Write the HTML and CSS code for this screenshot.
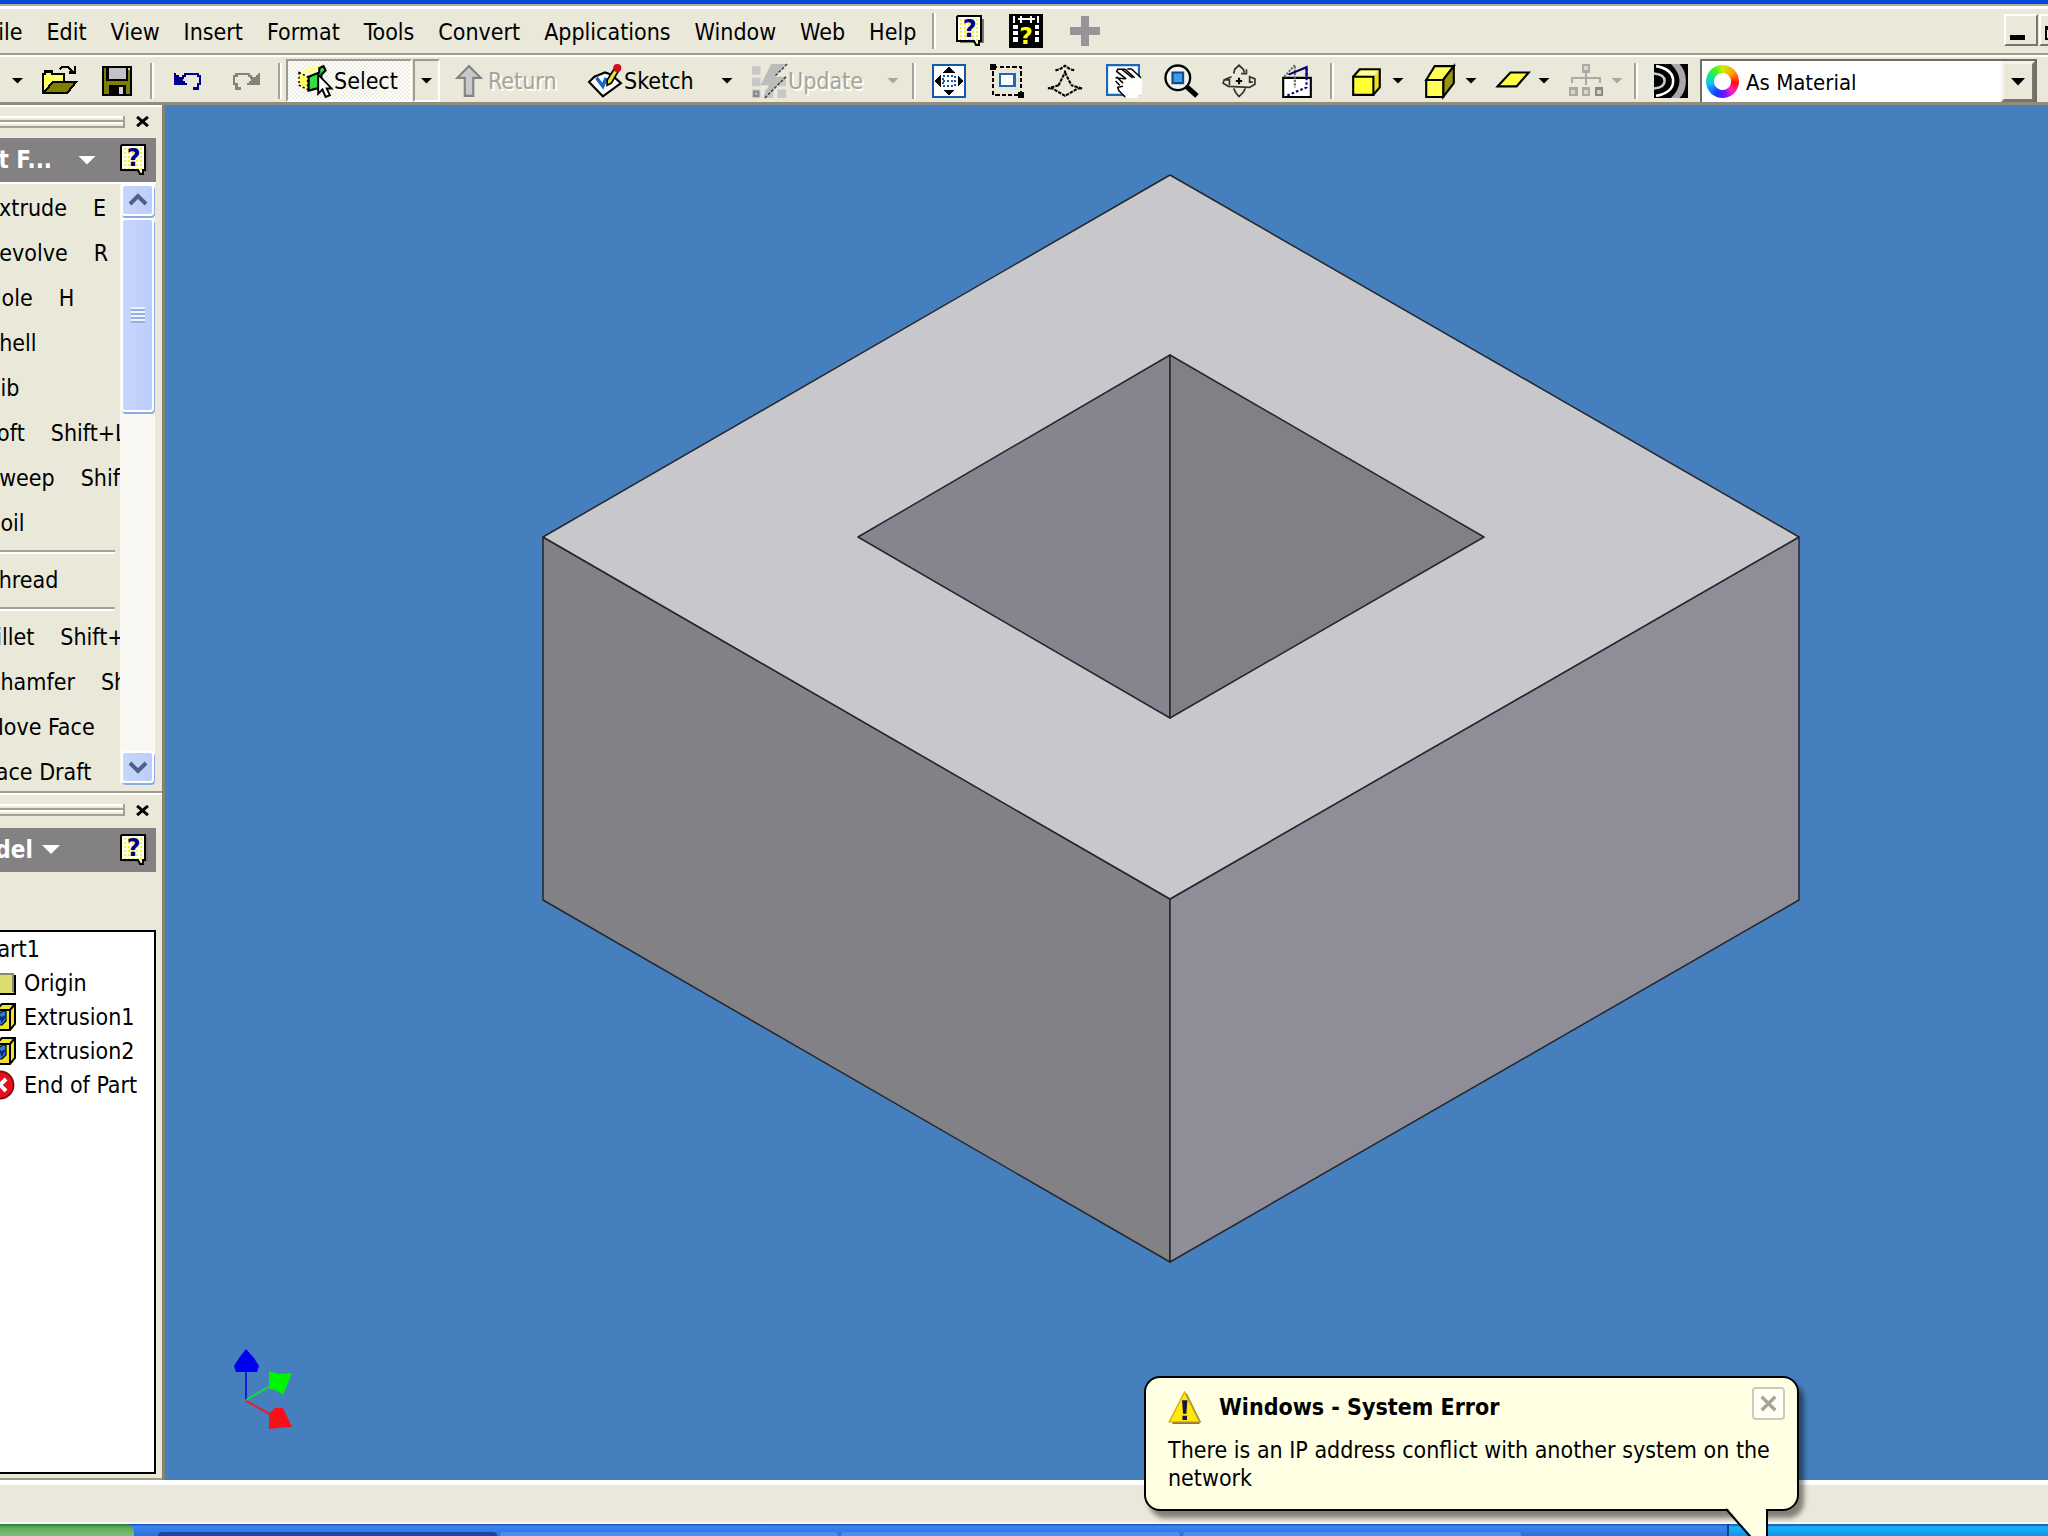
FILE: index.html
```
<!DOCTYPE html>
<html lang="en">
<head>
  <meta charset="UTF-8">
  <title>Part1</title>
  <link rel="stylesheet" href="styles.css">
</head>
<body>
  <div class="titlebar"></div>

  <nav class="menubar">
    <button class="menu">File</button>
    <button class="menu">Edit</button>
    <button class="menu">View</button>
    <button class="menu">Insert</button>
    <button class="menu">Format</button>
    <button class="menu">Tools</button>
    <button class="menu">Convert</button>
    <button class="menu">Applications</button>
    <button class="menu">Window</button>
    <button class="menu">Web</button>
    <button class="menu">Help</button>
    <span class="sep"></span>
    <div class="menu-icons">
      <button class="plain" aria-label="Help topics">
        <svg class="help-icon" viewBox="0 0 14 16"><use href="#help"/></svg>
      </button>
      <button class="plain" aria-label="Show me">
        <svg class="icon" viewBox="0 0 16 16" shape-rendering="crispEdges">
          <path d="M0 0h16v16H0z"/>
          <path fill="#fff" d="M2 1h1v3H2zM13 1h1v3h-1zM4 2h8v1H4zM5 1h1v3H5zM10 1h1v3h-1zM2 5h2v2H2zM2 8h2v2H2zM2 11h2v2H2zM12 5h2v2h-2zM12 8h2v2h-2zM12 11h2v2h-2z"/>
          <text x="8" y="14" class="glyph glyph-yellow">?</text>
        </svg>
      </button>
      <button class="plain" aria-label="Add">
        <svg class="icon" viewBox="0 0 16 16" shape-rendering="crispEdges">
          <path fill="#979399" d="M6 1h4v5h5v4h-5v5H6v-5H1V6h5z"/>
        </svg>
      </button>
    </div>
    <div class="window-buttons">
      <button class="win-btn" aria-label="Minimize"><span class="min-mark"></span></button>
      <button class="win-btn" aria-label="Restore"><span class="restore-mark"></span></button>
    </div>
  </nav>

  <div class="toolbar">
    <button class="caret-btn" aria-label="New options"><span class="caret"></span></button>
    <button class="tool" aria-label="Open">
      <svg class="icon" viewBox="0 0 16 16" shape-rendering="crispEdges">
        <path fill="#ffff66" stroke="#000" d="M.5 13.5v-9h1v-1h3v1h6v4h-5l-4 5z"/>
        <path fill="#808000" stroke="#000" d="M1 13.5l4-5h11l-4 5z"/>
        <path fill="none" stroke="#000" d="M8.500 2.500l1-1h3l2 2M15.500 1v3h-3"/>
      </svg>
    </button>
    <button class="tool" aria-label="Save">
      <svg class="icon" viewBox="0 0 16 16" shape-rendering="crispEdges">
        <path fill="#808000" stroke="#000" d="M1.500 1.500h13v13h-13z"/>
        <path fill="#c4c2c8" stroke="#000" d="M3.500 1.500h9v6h-9z"/>
        <path d="M4 10h8v5H4z"/>
        <path fill="#d4d2d8" d="M9 11h2v3H9zM13 2h1v1h-1z"/>
      </svg>
    </button>
    <span class="sep"></span>
    <button class="tool" aria-label="Undo">
      <svg class="icon" viewBox="0 0 16 16" shape-rendering="crispEdges">
        <path fill="#000090" d="M2 4h1v1h1v1h1v1h1v1h1v1h1v1H2z"/>
        <path fill="none" stroke="#000090" d="M5 6.500h1v-1h1v-1h6v1h1v4h-1v2h-2"/>
      </svg>
    </button>
    <button class="tool" aria-label="Redo">
      <svg class="icon" viewBox="0 0 16 16" shape-rendering="crispEdges">
        <path fill="#84827a" d="M15 4h-1v1h-1v1h-1v1h-1v1h-1v1H9v1h6z"/>
        <path fill="none" stroke="#84827a" d="M12 6.500h-1v-1h-1v-1H4v1H3v4h1v2h2"/>
      </svg>
    </button>
    <span class="sep"></span>
    <button class="select-btn">
      <svg class="icon" viewBox="0 0 16 16">
        <path fill="#ffffa0" d="M1 4l5-3h6l-5 4z"/>
        <path fill="#ffff66" stroke="#000" stroke-width=".7" stroke-dasharray="1 1" d="M.5 4l4 2v6l-4-2z"/>
        <path fill="#33dd44" stroke="#000" d="M5 6l5-2V2l2-1 1 2-2 2v6l-6 1.500z"/>
        <path fill="#fff" stroke="#000" stroke-width=".9" d="M9.500 5v9l2-2 1.500 3.500 2-.8-1.500-3.200h2.300z"/>
      </svg>
      Select
    </button>
    <button class="select-drop" aria-label="Select options"><span class="caret"></span></button>
    <button class="wide-tool" disabled>
      <svg class="icon" viewBox="0 0 16 16">
        <path fill="#c9c8cc" stroke="#85837d" d="M6 15V6.500H2.500L8 1l5.500 5.500H10V15z"/>
      </svg>
      Return
    </button>
    <button class="wide-tool">
      <svg class="icon" viewBox="0 0 16 16">
        <path fill="#fff" stroke="#000" d="M.5 8.500L3 6l5-2 3 1 4.500 4L7 15.200z"/>
        <path fill="none" stroke="#1267c8" stroke-width="1.600" d="M4 6.500l3 4 1.500-4"/>
        <path fill="#e8e040" stroke="#000" stroke-width=".8" d="M9 10V7.500L12.500 2l2 1-3.500 6z"/>
        <circle cx="13.800" cy="1.900" r="1.900" fill="#d40c1c"/>
      </svg>
      Sketch
    </button>
    <button class="caret-btn" aria-label="Sketch options"><span class="caret"></span></button>
    <button class="wide-tool update" disabled>
      <svg class="icon" viewBox="0 0 16 16">
        <path fill="#c9c8c8" d="M0 1h4v4H0zM0 6.500h4v4H0zM0 12h4v4H0zM6 12h4v4H6zM12 12h4v4h-4zM12 6.500h4v4h-4z"/>
        <path fill="#bdbcbd" d="M9 0h7L10 6h6L5 16l3-6H4z"/>
        <path fill="none" stroke="#3d3d3d" stroke-width=".7" stroke-dasharray="1.500 .6" d="M16.500 0l-6 6M16 6L6 16"/>
        <path fill="none" stroke="#8e8c89" d="M1 13h2v2H1z"/>
      </svg>
      Update
    </button>
    <button class="caret-btn" aria-label="Update options" disabled><span class="caret caret-off"></span></button>
    <span class="sep"></span>
    <button class="tool" aria-label="Zoom all">
      <svg class="icon" viewBox="0 0 16 16" shape-rendering="crispEdges">
        <path fill="#fff" stroke="#155aa8" d="M.5.5h15v15H.5z"/>
        <path d="M8 1l3 3H5zM8 15l3-3H5zM1 8l3-3v6zM15 8l-3-3v6z"/>
        <path fill="none" stroke="#155aa8" stroke-dasharray="1 1" d="M5 5.500h6v5H5zM5 8h6"/>
      </svg>
    </button>
    <button class="tool" aria-label="Zoom window">
      <svg class="icon" viewBox="0 0 16 16" shape-rendering="crispEdges">
        <path fill="none" stroke="#000" stroke-dasharray="2 1" d="M1.500 1.500h13v13h-13z"/>
        <path d="M0 0h3v3H0zM13 13h3v3h-3z"/>
        <path fill="#fff" stroke="#1b68bb" d="M4.500 4.500h7v6h-7z"/>
      </svg>
    </button>
    <button class="tool" aria-label="Zoom">
      <svg class="icon" viewBox="0 0 16 16">
        <path fill="none" stroke="#000" stroke-dasharray="1.600 .5" d="M3.500 3l2-.5L8 .8l2.500 1.700 2 .5M8 3v1l-1 2-2 4M8 4l1 2 2 4M5 10l-5 1.500h2L8 15l6-3.500h2L11 10"/>
      </svg>
    </button>
    <button class="tool" aria-label="Pan">
      <svg class="icon" viewBox="0 0 16 16">
        <path fill="#fff" stroke="#1b68bb" d="M.5.5h15v14H.5z"/>
        <path fill="#fff" d="M5 2.500h7l5 5V14l-3 2h-4l-5-5z"/>
        <path fill="none" stroke="#000" stroke-width=".7" d="M9.500 7L5 3.500l.5-1h2l5 4M7.500 2.500H9l4.500 4M10 2.300h2L16.500 6.500M9 7l-4.500-.5M5 6l3 3M4.500 8l2 2M8 10.500L5.500 11l.5 1.500L9 15.500"/>
      </svg>
    </button>
    <button class="tool" aria-label="Zoom selected">
      <svg class="icon" viewBox="0 0 16 16">
        <path stroke="#000" stroke-width="2.400" d="M10.500 10.500l5 4.500"/>
        <circle cx="6.500" cy="6.500" r="5.800" fill="#f4f4ee" stroke="#000" stroke-width="1.100"/>
        <path fill="#3a9bf0" stroke="#124a86" d="M4 4h5v5H4z"/>
      </svg>
    </button>
    <button class="tool" aria-label="Rotate">
      <svg class="icon" viewBox="0 0 16 16">
        <path fill="none" stroke="#333" stroke-width=".8" d="M5.500 4.500l.5-2L8 .6l2 1.900.5 1.500M9 4.500h2.500v-2M4.500 6L1 7.500.500 9 3 10.500l10 .5 2.500-1.500V7L13 6v2.500h1.500M1 7.500h2.500V10M5.500 11.500l1 2L8 15.300l2-2 1-2"/>
        <path fill="none" stroke="#000" d="M8 6.500v3M6.500 8h3"/>
      </svg>
    </button>
    <button class="tool" aria-label="Look at">
      <svg class="icon" viewBox="0 0 16 16">
        <path fill="#fff" stroke="#000" d="M1.500 6.500h13v9h-13z"/>
        <path fill="none" stroke="#6b6b6b" stroke-dasharray="1 .6" d="M2 6l5-5.500V11"/>
        <path fill="none" stroke="#000080" stroke-dasharray="1.200 1" d="M12.500 2v9L3 15"/>
        <path fill="none" stroke="#000080" d="M4 5l8.500-3.500V6"/>
      </svg>
    </button>
    <span class="sep"></span>
    <div class="pair">
      <button class="plain" aria-label="Display shaded">
        <svg class="icon" viewBox="0 0 16 16">
          <path fill="#e8e020" stroke="#000" d="M1.500 6l3-3.500H14V11l-3 3.500z"/>
          <path fill="#ffff99" d="M3 5.500L5.200 3h8.300l-2.200 2.500z"/>
          <path fill="#ffff33" stroke="#000" d="M1.500 6H11v8.500H1.500z"/>
        </svg>
      </button>
      <button class="caret-btn" aria-label="Display options"><span class="caret"></span></button>
    </div>
    <div class="pair">
      <button class="plain" aria-label="Camera">
        <svg class="icon" viewBox="0 0 16 16">
          <path fill="#ffff55" stroke="#000" d="M1.500 7.500l4-6.500h9l-5 6.500z"/>
          <path fill="#99960c" stroke="#000" d="M9.500 7.500l5-6.500v8l-5 6.500z"/>
          <path fill="#ffff55" stroke="#000" d="M1.500 7.500h8v8h-8z"/>
        </svg>
      </button>
      <button class="caret-btn" aria-label="Camera options"><span class="caret"></span></button>
    </div>
    <div class="pair">
      <button class="plain" aria-label="Ground shadow">
        <svg class="icon" viewBox="0 0 16 16">
          <path fill="#ffff44" stroke="#000" d="M.8 10.500l6-6.500h8.600l-5.700 6.500z"/>
        </svg>
      </button>
      <button class="caret-btn" aria-label="Shadow options"><span class="caret"></span></button>
    </div>
    <div class="pair">
      <button class="plain" aria-label="Component opacity" disabled>
        <svg class="icon" viewBox="0 0 16 16" shape-rendering="crispEdges">
          <path fill="#d6d4cc" stroke="#aaa9a2" d="M6.500.5h3v3h-3zM.5 11.500h3v3h-3zM6.500 11.500h3v3h-3z"/>
          <path fill="#d6d4cc" stroke="#8b8982" d="M12.500 11.500h3v3h-3z"/>
          <path fill="none" stroke="#aaa9a2" d="M8 4v6M1.500 9V6.500h13V9"/>
        </svg>
      </button>
      <button class="caret-btn" aria-label="Opacity options" disabled><span class="caret caret-off"></span></button>
    </div>
    <span class="sep"></span>
    <button class="tool" aria-label="Analyze faces">
      <svg class="icon zebra" viewBox="0 0 16 16">
        <path d="M0 0h16v16H0z"/>
        <path fill="#aaa8ac" d="M8 0h4q3 3 3 8t-3 8H8q4-4 4-8T8 0z"/>
        <path fill="none" stroke="#fff" stroke-width="1.200" d="M1 1q8 1.500 8 7t-8 7"/>
        <path fill="none" stroke="#ccc" stroke-width="1.200" d="M0 4.500q5 .5 5 3.500t-5 3.500"/>
      </svg>
    </button>
    <div class="combo">
      <span class="wheel"></span>
      <select class="combo-select" aria-label="Color">
        <option>As Material</option>
      </select>
      <span class="combo-arrow"><span class="caret"></span></span>
    </div>
  </div>

  <main class="workspace">
    <aside class="sidebar">
      <section class="panel">
        <div class="grip"><span class="grip-bar"></span><button class="close" aria-label="Close panel"><svg class="close-icon" viewBox="0 0 6 5"><use href="#cross"/></svg></button></div>
        <header class="panel-head">
          <h2 class="panel-title features">Part F...</h2>
          <span class="caret caret-white"></span>
          <button class="plain panel-help" aria-label="Help"><svg class="help-icon" viewBox="0 0 14 16"><use href="#help"/></svg></button>
        </header>
        <div class="list-area">
          <ul class="commands">
            <li>Extrude<kbd>E</kbd></li>
            <li>Revolve<kbd>R</kbd></li>
            <li>Hole<kbd>H</kbd></li>
            <li>Shell</li>
            <li>Rib</li>
            <li>Loft<kbd>Shift+L</kbd></li>
            <li>Sweep<kbd>Shift+S</kbd></li>
            <li>Coil</li>
            <li class="divider"></li>
            <li>Thread</li>
            <li class="divider"></li>
            <li>Fillet<kbd>Shift+F</kbd></li>
            <li>Chamfer<kbd>Shift+K</kbd></li>
            <li>Move Face</li>
            <li>Face Draft</li>
          </ul>
          <div class="scrollbar">
            <button class="scroll-btn" aria-label="Scroll up">
              <svg class="chevron" viewBox="0 0 10 7"><path d="M1 5.500l4-4 4 4"/></svg>
            </button>
            <div class="thumb"><span class="thumb-grip"></span></div>
            <button class="scroll-btn scroll-down" aria-label="Scroll down">
              <svg class="chevron" viewBox="0 0 10 7"><path d="M1 1.500l4 4 4-4"/></svg>
            </button>
          </div>
        </div>
      </section>

      <section class="panel">
        <div class="grip"><span class="grip-bar"></span><button class="close" aria-label="Close panel"><svg class="close-icon" viewBox="0 0 6 5"><use href="#cross"/></svg></button></div>
        <header class="panel-head">
          <h2 class="panel-title model">Model</h2>
          <span class="caret caret-white"></span>
          <button class="plain panel-help" aria-label="Help"><svg class="help-icon" viewBox="0 0 14 16"><use href="#help"/></svg></button>
        </header>
        <ul class="tree">
          <li class="root">Part1</li>
          <li>
            <svg class="node-icon" viewBox="0 0 8 14">
              <path fill="#dddc70" d="M0 2h1l1 1h5v9H0z"/>
              <path fill="none" stroke="#8a8870" d="M0 2.500h6.500v9"/>
              <path fill="none" stroke="#000" d="M0 12.500h7.500V3"/>
            </svg>
            Origin
          </li>
          <li><svg class="node-icon" viewBox="0 0 8 14"><use href="#extrusion"/></svg>Extrusion1</li>
          <li><svg class="node-icon" viewBox="0 0 8 14"><use href="#extrusion"/></svg>Extrusion2</li>
          <li>
            <svg class="node-icon" viewBox="0 0 8 14">
              <circle cx="0" cy="7" r="6.800" fill="#e4101c" stroke="#7a0a10" stroke-width=".8"/>
              <path stroke="#fff" stroke-width="2" d="M-3 4l6 6M-3 10l6-6"/>
            </svg>
            End of Part
          </li>
        </ul>
      </section>
    </aside>

    <svg class="canvas" viewBox="165 105 1883 1375" role="img" aria-label="Extruded block with a square pocket">
      <g stroke="#26262a" stroke-width="1.500" stroke-linejoin="round">
        <path fill="#828186" d="M543 537l627 362v363L543 900z"/>
        <path fill="#8f8d98" d="M1170 899l629-362v363l-629 362z"/>
        <path fill="#c8c7cc" d="M1170 175l629 362-629 362-627-362z"/>
        <path fill="#86848f" d="M1170 355v363L858 537z"/>
        <path fill="#818087" d="M1170 355l314 182-314 181z"/>
      </g>
      <!-- axis triad -->
      <path stroke="#1a1ad8" stroke-width="2" d="M246 1400v-30"/>
      <path fill="#0000f0" d="M246 1349l8 9 5 8-2 6h-21l-2-6 5-8z"/>
      <path stroke="#10e030" stroke-width="2" d="M246 1400l24-14"/>
      <path fill="#00f400" d="M269 1371l10 3 13-1-9 22-5-4-9-2z"/>
      <path stroke="#e0202c" stroke-width="2" d="M246 1401l24 13"/>
      <path fill="#f81018" d="M269 1429v-15l6-6h8l9 19-14 1z"/>
    </svg>
  </main>

  <div class="statusbar"></div>

  <footer class="taskbar">
    <button class="start" aria-label="Start"></button>
    <div class="tasks">
      <button class="task active" aria-label="Task 1"></button>
      <button class="task" aria-label="Task 2"></button>
      <button class="task" aria-label="Task 3"></button>
      <button class="task" aria-label="Task 4"></button>
    </div>
    <div class="tray"></div>
  </footer>

  <div class="balloon" role="alert">
    <div class="balloon-head">
      <svg class="warn" viewBox="0 0 16 16">
        <path fill="#777" d="M9 1l7 14-1 1H2z"/>
        <path fill="#ffe80c" stroke="#d8a800" stroke-width=".6" d="M8 .5L15.300 15H.6z"/>
        <path fill="#15154a" d="M6.800 4.500h2.600L8.900 11H7.300zM7 12h2.200v2H7z"/>
      </svg>
      <strong class="balloon-title">Windows - System Error</strong>
      <button class="balloon-close" aria-label="Close">
        <svg class="balloon-x" viewBox="0 0 10 10"><path d="M1 1l8 8M9 1L1 9"/></svg>
      </button>
    </div>
    <p class="balloon-text">There is an IP address conflict with another system on the network</p>
    <svg class="tail" viewBox="0 0 42 32">
      <path fill="#ffffe4" d="M0 0h41v32H28z"/>
      <path fill="none" stroke="#000" stroke-width="2" d="M0 2l29 33M41 2v30"/>
    </svg>
  </div>

  <svg class="defs" width="0" height="0" aria-hidden="true">
    <defs>
      <pattern id="dots" width="2" height="2" patternUnits="userSpaceOnUse">
        <path fill="#fffff0" d="M0 0h2v2H0z"/>
        <path fill="#f4f040" d="M0 0h1v1H0z"/>
      </pattern>
      <g id="help">
        <path fill="#77756c" d="M2 2h12v12H2z"/>
        <path fill="url(#dots)" stroke="#000" d="M1 .5h11.500V13h-1v2H10l-1-2H.5V1z"/>
        <text x="6.800" y="11" class="glyph glyph-navy">?</text>
      </g>
      <g id="cross"><path fill="none" stroke="#000" stroke-width="1.400" d="M.5.400l5 4.200M5.500.400l-5 4.200"/></g>
      <g id="extrusion">
        <path fill="#f0e428" stroke="#000" d="M-2 3.500L1 .5h6.500v10l-2.500 3h-7z"/>
        <path fill="none" stroke="#000" d="M5 3.500v10M-2 3.500h7l2.500-3"/>
        <path fill="#2a78d8" stroke="#000" stroke-width=".6" d="M-1 6l2-2h2v5l-2 2h-2z"/>
        <path d="M-1 6l2 1 2-1-2 4z" fill="#0b2a70"/>
      </g>
    </defs>
  </svg>
</body>
</html>
```
FILE: styles.css
```
* {
  box-sizing: border-box;
}
body {
  margin: 0;
  height: 100vh;
  display: flex;
  flex-direction: column;
  overflow: hidden;
  position: relative;
  font-family: "DejaVu Sans Condensed", "DejaVu Sans", sans-serif;
  font-size: 23px;
  color: #000;
  background: #e9e8d9;
}
button {
  font: inherit;
  color: inherit;
  background: none;
  border: 0;
  padding: 0;
  margin: 0;
  flex-shrink: 0;
}
ul {
  list-style: none;
  margin: 0;
  padding: 0;
}
.icon {
  width: 34px;
  height: 34px;
  display: block;
  flex-shrink: 0;
  overflow: visible;
}
.help-icon {
  width: 28px;
  height: 32px;
  display: block;
}
.zebra {
  overflow: hidden;
}
.plain {
  display: flex;
  align-items: center;
  justify-content: center;
}
.glyph {
  font-family: "DejaVu Sans", sans-serif;
  font-weight: bold;
  font-size: 12px;
  text-anchor: middle;
}
.glyph-navy {
  fill: #000080;
}
.glyph-yellow {
  fill: #ffff00;
  font-size: 11px;
}
.defs {
  position: absolute;
}

/* title + menu */
.titlebar {
  height: 4px;
  background: #0048dc;
}
.menubar {
  display: flex;
  align-items: center;
  gap: 24px;
  height: 51px;
  flex-shrink: 0;
  padding-bottom: 4px;
  border-top: 2px solid #b0ac98;
  border-bottom: 2px solid #9d9c8d;
  box-shadow: inset 0 3px #fff;
}
.menu:first-child {
  margin-left: -12px;
}
.menu {
  line-height: 38px;
  padding-top: 8px;
}
.sep {
  width: 4px;
  height: 36px;
  margin: 0 4px;
  flex-shrink: 0;
  border-left: 2px solid #a3a294;
  border-right: 2px solid #fff;
}
.menubar .sep {
  margin: 6px -4px 0 -8px;
}
.menu-icons {
  display: flex;
  align-items: center;
  gap: 25px;
  padding-top: 6px;
}
.window-buttons {
  display: flex;
  gap: 1px;
  margin-left: auto;
  margin-right: -25px;
  padding-top: 5px;
}
.win-btn {
  width: 34px;
  height: 32px;
  border: 2px solid;
  border-color: #fff #77756a #77756a #fff;
  display: flex;
  align-items: flex-end;
  padding: 4px;
}
.min-mark {
  width: 15px;
  height: 5px;
  background: #000;
}
.restore-mark {
  width: 16px;
  height: 14px;
  border: 2px solid #000;
  border-top-width: 4px;
}

/* toolbar */
.toolbar {
  display: flex;
  align-items: center;
  height: 50px;
  flex-shrink: 0;
  padding-top: 2px;
  border-top: 2px solid #fff;
  border-bottom: 3px solid #8f8c80;
}
.toolbar > .caret-btn:first-child {
  padding-left: 5px;
}
.caret-btn {
  width: 30px;
  height: 40px;
  display: flex;
  align-items: center;
  justify-content: center;
}
.caret {
  width: 12px;
  height: 6px;
  background: #000;
  clip-path: polygon(0 0, 100% 0, 50% 100%);
}
.caret-off {
  background: #a9a89b;
}
.tool {
  width: 58px;
  height: 40px;
  display: flex;
  align-items: center;
  justify-content: center;
}
.select-btn,
.select-drop {
  align-self: stretch;
  display: flex;
  align-items: center;
  border: 2px solid;
  border-color: #9c9b8c #fff #fff #9c9b8c;
}
.select-btn {
  width: 126px;
  gap: 2px;
  padding-left: 10px;
  background: repeating-conic-gradient(#fff 0 25%, #efede2 0 50%) 0 0 / 4px 4px;
}
.select-drop {
  width: 27px;
  margin-left: 1px;
  justify-content: center;
}
.wide-tool {
  width: 136px;
  height: 40px;
  display: flex;
  align-items: center;
  gap: 2px;
  padding-left: 12px;
}
.wide-tool:disabled {
  color: #a6a598;
  text-shadow: 2px 2px #fff;
}
.update {
  padding-left: 10px;
}
.pair {
  display: flex;
  align-items: center;
  flex-shrink: 0;
  margin-left: 11px;
}
.pair .plain {
  width: 36px;
}
.pair .caret-btn {
  width: 26px;
}
.combo {
  flex: 1;
  align-self: stretch;
  display: flex;
  align-items: center;
  margin-right: 11px;
  padding-left: 4px;
  background: #fff;
  border: 2px solid #6f6d62;
  border-bottom: 0;
}
.wheel {
  width: 33px;
  height: 33px;
  flex-shrink: 0;
  border-radius: 50%;
  background: radial-gradient(#fff 0 8px, transparent 9px), conic-gradient(#c8f000, #ffa000 50deg, #ff1010 95deg, #ff20c0 135deg, #7010ff 170deg, #1040ff 210deg, #10c0f8 260deg, #10f070 300deg, #50f020 330deg, #c8f000);
}
.combo-select {
  appearance: none;
  flex: 1;
  min-width: 0;
  height: 38px;
  padding: 2px 7px 0;
  border: 0;
  background: none;
  font: inherit;
  font-size: 22px;
  color: #000;
}
.combo-arrow {
  width: 34px;
  align-self: stretch;
  display: flex;
  align-items: center;
  justify-content: center;
  background: #e9e8d9;
  border: 3px solid;
  border-color: #f6f5ec #77756a #77756a #f6f5ec;
}
.combo-arrow .caret {
  width: 15px;
  height: 8px;
}

/* left side */
.workspace {
  flex: 1;
  min-height: 0;
  display: flex;
}
.sidebar {
  width: 165px;
  flex-shrink: 0;
  display: flex;
  flex-direction: column;
  border-right: 3px solid #85826f;
}
.panel {
  flex: 1 1 0;
  min-height: 0;
  display: flex;
  flex-direction: column;
  padding-right: 6px;
  border-bottom: 2px solid #9d9c8d;
  box-shadow: inset 0 2px #fff;
}
.grip {
  display: flex;
  align-items: center;
  gap: 11px;
  height: 33px;
  flex-shrink: 0;
}
.panel + .panel .grip {
  height: 35px;
}
.grip-bar {
  width: 125px;
  height: 12px;
  border-right: 2px solid #a3a294;
  background: linear-gradient(#fff 0 2px, #e9e8d9 2px 4px, #a3a294 4px 6px, #fff 6px 8px, #e9e8d9 8px 10px, #a3a294 10px);
}
.close {
  display: flex;
}
.close-icon {
  width: 13px;
  height: 11px;
}
.panel-head {
  display: flex;
  align-items: center;
  height: 44px;
  flex-shrink: 0;
  overflow: hidden;
  background: #838183;
  color: #fff;
}
.panel-title {
  margin: 0;
  font-size: 24px;
  font-weight: bold;
  white-space: nowrap;
}
.features {
  width: 120px;
  margin-left: -42px;
}
.model {
  width: 83px;
  margin-left: -41px;
}
.caret-white {
  width: 18px;
  height: 9px;
  background: #fff;
}
.panel-help {
  margin: 0 8px 0 auto;
}
.list-area {
  flex: 1;
  min-height: 0;
  display: flex;
  overflow: hidden;
  border-top: 2px solid #fff;
}
.commands {
  width: 120px;
  overflow: hidden;
  padding-top: 2px;
}
.commands li {
  line-height: 45px;
  margin-left: -14px;
  white-space: nowrap;
}
.commands kbd {
  font: inherit;
  line-height: 20px;
  margin-left: 26px;
}
.commands .divider {
  height: 4px;
  margin: 4px 5px 4px 0;
  border-top: 2px solid #a3a294;
  border-bottom: 2px solid #fff;
}
.scrollbar {
  width: 35px;
  display: flex;
  flex-direction: column;
  align-items: center;
  gap: 2px;
  margin-bottom: 8px;
  background: #f9f8f3;
}
.scroll-btn,
.thumb {
  width: 33px;
  display: flex;
  align-items: center;
  justify-content: center;
  background: linear-gradient(90deg, #c8d6fc, #bccdfb);
  border: 2px solid #fff;
  border-radius: 4px;
  box-shadow: 1px 2px #8eaae4;
}
.scroll-btn {
  height: 32px;
}
.scroll-down {
  margin-top: auto;
}
.thumb {
  height: 194px;
}
.thumb-grip {
  width: 14px;
  height: 16px;
  background: repeating-linear-gradient(#eef4fe 0 2px, #93aee8 2px 4px);
}
.chevron {
  width: 20px;
  height: 14px;
  fill: none;
  stroke: #4d6185;
  stroke-width: 2;
}
.tree {
  flex: 1;
  overflow: hidden;
  margin: 58px 0 4px;
  background: #fff;
  border: 2px solid #000;
  border-left: 0;
}
.tree li {
  display: flex;
  align-items: center;
  gap: 8px;
  height: 34px;
  white-space: nowrap;
}
.tree .root {
  margin-left: -14px;
}
.node-icon {
  width: 16px;
  height: 30px;
  flex-shrink: 0;
}

/* model view */
.canvas {
  flex: 1;
  min-width: 0;
  height: 100%;
  background: #467fbe;
}

/* bottom */
.statusbar {
  height: 44px;
  flex-shrink: 0;
  background: #eae8da;
  border-top: 5px solid #fff;
  border-bottom: 2px solid #f8f7f0;
}
.taskbar {
  display: flex;
  height: 12px;
  flex-shrink: 0;
  background: linear-gradient(#1f58c8 0 1px, #3c86ec 2px, #2d6fe0);
}
.start {
  width: 134px;
  background: linear-gradient(#2f7a34, #5fae60 4px, #7cbc7c);
  border-radius: 0 8px 0 0;
}
.tasks {
  flex: 1;
  display: grid;
  grid-template-columns: repeat(4, 1fr);
  gap: 3px;
  padding: 8px 206px 0 24px;
}
.task {
  background: #4a8ff8;
  border-radius: 4px 4px 0 0;
}
.task.active {
  background: #1a45a4;
}
.tray {
  width: 321px;
  background: linear-gradient(#1266c0 0 1px, #18b4f2 3px, #1492ea);
  border-left: 2px solid #0c3f94;
}

.balloon {
  position: absolute;
  right: 249px;
  bottom: 25px;
  width: 655px;
  padding: 8px 12px 17px 22px;
  background: #ffffe4;
  border: 2px solid #000;
  border-radius: 16px;
  box-shadow: 5px 7px 5px rgba(0, 0, 0, 0.45);
}
.balloon-head {
  display: flex;
  align-items: center;
  height: 42px;
}
.warn {
  width: 33px;
  height: 33px;
  margin-right: 18px;
}
.balloon-close {
  width: 33px;
  height: 33px;
  margin: 0 0 8px auto;
  display: flex;
  align-items: center;
  justify-content: center;
  background: #fffff4;
  border: 2px solid #cfcbb8;
  border-radius: 4px;
}
.balloon-x {
  width: 17px;
  height: 17px;
  fill: none;
  stroke: #aaa294;
  stroke-width: 2;
}
.balloon-text {
  margin: 8px 0 0;
  line-height: 28px;
}
.tail {
  position: absolute;
  right: 29px;
  top: 100%;
  width: 42px;
  height: 32px;
  margin-top: -2px;
}
```
